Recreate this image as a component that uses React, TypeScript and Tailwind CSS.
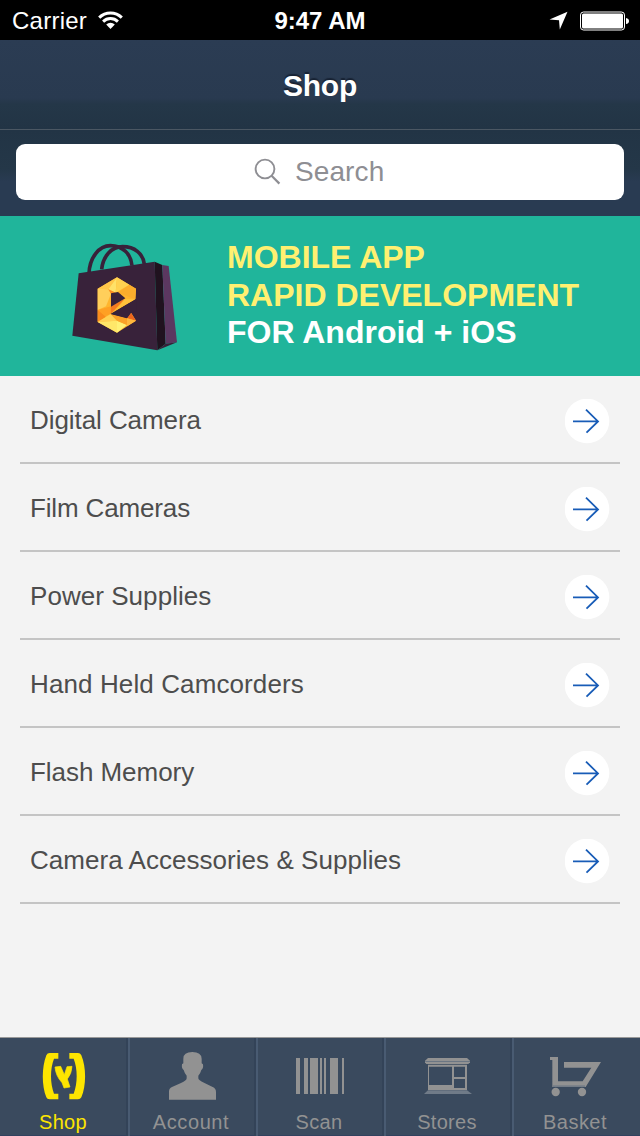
import type { ReactNode } from "react";

const categories = [
  { name: "Digital Camera", spacing: "tracking-[-0.07px]" },
  { name: "Film Cameras", spacing: "tracking-[-0.15px]" },
  { name: "Power Supplies", spacing: "tracking-[0.05px]" },
  { name: "Hand Held Camcorders", spacing: "tracking-[0.11px]" },
  { name: "Flash Memory", spacing: "tracking-[-0.05px]" },
  { name: "Camera Accessories & Supplies", spacing: "tracking-[0.04px]" },
];

function StatusBar() {
  return (
    <div className="flex h-10 items-center bg-black text-white">
      <div className="flex w-[240px] items-center gap-[11px] pl-3">
        <span className="w-[75px] pt-[2px] text-[24px] leading-[40px] tracking-[0.25px] whitespace-nowrap">Carrier</span>
        <svg className="h-[18px] w-[25px]" viewBox="0 0 25 18" fill="none" stroke="white">
          <path d="M1.2 6.6a16 16 0 0 1 22.6 0" strokeWidth="3" />
          <path d="M5.1 10.6a10.5 10.5 0 0 1 14.8 0" strokeWidth="2.9" />
          <path d="M12.5 18 8.2 13.6a6.2 6.2 0 0 1 8.6 0z" fill="white" stroke="none" />
        </svg>
      </div>
      <div className="w-[160px] pt-[2px] text-center text-[24px] leading-[40px] font-bold whitespace-nowrap">9:47 AM</div>
      <div className="flex w-[240px] items-center justify-end pr-[11px]">
        <svg className="mr-[11px] h-[20px] w-[19px]" viewBox="0 0 19 20" fill="white">
          <path d="M.5 9.6 18.5 1.8 10.8 19.6 10 10.2z" />
        </svg>
        <svg className="mt-px h-[20px] w-[50px]" viewBox="0 0 50 20">
          <rect x="1.5" y="1" width="44" height="18" rx="3" fill="none" stroke="white" strokeWidth="1" />
          <rect x="3" y="2.5" width="41" height="15" rx="1.5" fill="white" />
          <path d="M47 7q3 .5 3 3t-3 3z" fill="white" />
        </svg>
      </div>
    </div>
  );
}

function Bag() {
  return (
    <svg className="h-[130px] w-[130px]" viewBox="0 0 390 390">
      <g fill="none" stroke="#38223a" strokeWidth="11">
        <path d="M87 132C88 82 118 47 151 47C188 47 213 72 216 107" />
        <path d="M125 118C129 78 155 50 188 50C223 50 249 70 253 103" />
      </g>
      <path d="M56 130 284 95 292 361 37 317z" fill="#38223a" />
      <path d="M284 95 307 105 317 341 292 361z" fill="#20121f" />
      <path d="M307 105 326 108 351 337 317 341z" fill="#5b3760" />
      <path d="M292 361 317 341 351 337z" fill="#382039" />
      <path d="M171 142 228 176 226 208 152 252 201 265 213 248 228 272 171 308 113 276V176z" fill="#ffb52e" />
      <path d="M171 142 113 176 145 178z" fill="#ffc64a" />
      <path d="M171 142 167 188 145 178z" fill="#ffe168" />
      <path d="M171 142 208 164 167 188z" fill="#ffd150" />
      <path d="M208 164 228 176 226 208 174 188z" fill="#fbad2c" />
      <path d="M113 176 145 178 153 191 138 229 113 240z" fill="#ffcf5b" />
      <path d="M145 178 167 188 153 191z" fill="#f88b1f" />
      <path d="M113 240 153 229 152 252 130 262z" fill="#ffa024" />
      <path d="M113 240 138 261 113 276z" fill="#f98b1d" />
      <path d="M153 229 195 206 152 252z" fill="#f47a20" />
      <path d="M195 206 226 208 169 240z" fill="#ffc13b" />
      <path d="M113 276 152 252 171 272z" fill="#ffd155" />
      <path d="M113 276 171 272V308z" fill="#ffe769" />
      <path d="M171 272 201 285 171 308z" fill="#fff176" />
      <path d="M152 252 201 265 201 285 171 272z" fill="#faa227" />
      <path d="M201 265 213 248 228 272z" fill="#ed671d" />
      <path d="M201 265 228 272 201 289z" fill="#ffb83d" />
      <path d="M153 190 174 186 196 205 153 230z" fill="#38223a" />
      <path d="M152 252 230 206V244L213 248 201 265z" fill="#38223a" />
    </svg>
  );
}

function Tab({ label, active = false, edges, spacing = "", children }: { label: string; active?: boolean; edges: string; spacing?: string; children: ReactNode }) {
  return (
    <div className={`flex w-32 flex-col items-center ${edges} ${active ? "text-[#fde500]" : "text-[#929292]"}`}>
      <svg className="h-[70px] w-32 shrink-0" viewBox="0 24 384 210" fill="currentColor">
        {children}
      </svg>
      <span className={`pr-[2px] text-[20px] leading-[29px] whitespace-nowrap ${spacing}`}>{label}</span>
    </div>
  );
}

const innerEdges = "shadow-[inset_2px_0_#495b72,inset_-2px_0_#334358,inset_0_-1px_#31415e]";

export default function App() {
  return (
    <div className="flex h-[1136px] w-[640px] flex-col overflow-hidden bg-[#f3f3f3] font-['Liberation_Sans',Arial,sans-serif]">
      <StatusBar />
      <header className="flex h-[90px] items-center justify-center border-b border-[#4b5763] bg-[linear-gradient(#2b3c53_0%,#293a50_65%,#243748_72%,#223445_100%)] pt-[2px] text-[30px] font-bold tracking-[-0.2px] text-white [text-shadow:0_-2px_1px_#182334]">
        Shop
      </header>
      <div className="h-[86px] bg-[linear-gradient(#223445_0%,#243748_45%,#293b52_60%,#293b52_100%)] px-4 pt-[14px]">
        <div className="flex h-14 items-center rounded-[9px] bg-white pl-[238px] text-[#8e8e93]">
          <svg className="-mt-px h-[27px] w-[27px]" viewBox="0 0 27 27" fill="none" stroke="currentColor" strokeWidth="1.9">
            <circle cx="11" cy="11" r="9.4" />
            <path d="m17.6 17.8 7.8 7.8" strokeWidth="2.2" />
          </svg>
          <span className="ml-[14px] text-[28px] tracking-[0.1px]">Search</span>
        </div>
      </div>
      <section className="flex h-40 bg-[#20b59b] pt-[14px] pl-[60px]">
        <Bag />
        <div className="pt-[8px] pl-[37px] text-[32px] leading-[38px] font-bold whitespace-nowrap text-[#fff071]">
          <div>MOBILE APP</div>
          <div>RAPID DEVELOPMENT</div>
          <div className="-mt-px text-white">FOR Android + iOS</div>
        </div>
      </section>
      <main className="flex-1 px-5">
        {categories.map((item) => (
          <div key={item.name} className="flex h-[88px] items-center justify-between border-b-2 border-[#c4c4c4] pr-[10px] pl-[10px]">
            <span className={`pt-[2px] text-[26px] whitespace-nowrap text-[#4d4d4d] ${item.spacing}`}>{item.name}</span>
            <svg className="mt-[4px] h-[45px] w-[45px]" viewBox="0 0 45 45">
              <circle cx="22" cy="22" r="22.3" fill="white" />
              <path d="M8 22.4h25M21 10.6 33 22.4 21.5 33.6" fill="none" stroke="#185cb7" strokeWidth="1.8" />
            </svg>
          </div>
        ))}
      </main>
      <nav className="flex h-[99px] border-t border-[#999999] bg-[#3a4a5e]">
        <Tab label="Shop" active edges="shadow-[inset_-2px_0_#334358,inset_0_-1px_#31415e]" spacing="tracking-[0.3px]">
          <path d="M175 69V86H162C150 117 150 159 162 191H175V208H149Q141 208 139 202C125 168 125 111 139 76Q142 69 149 69zM208 69H234Q241 69 244 76C259 111 259 168 244 202Q241 208 234 208H208V191H221C233 159 233 117 221 86H208z" />
          <path d="M165 111 182 109 193 134 201 110 216 109Q215 132 202 147L210 171 192 174 186 158Q167 138 165 111z" stroke="currentColor" strokeWidth="2" />
        </Tab>
        <Tab label="Account" edges={innerEdges} spacing="tracking-[0.6px]">
          <path d="M123 209V184Q123 175 132 171L159 159Q176 152 176 145V137Q170 131 167 120Q160 116 162 103L166 100V86Q166 66 193 66T221 86V100L225 103Q227 116 220 120Q217 131 211 137V145Q211 151 228 158L254 171Q264 175 264 186V209z" />
        </Tab>
        <Tab label="Scan" edges={innerEdges} spacing="tracking-[0.3px]">
          <path d="M120 84h12v108h-12zM144 84h12v108h-12zM162 84h24v108h-24zM192 84h6v108h-6zM204 84h6v108h-6zM222 84h24v108h-24zM258 84h6v108h-6z" />
        </Tab>
        <Tab label="Stores" edges={innerEdges} spacing="tracking-[0.3px]">
          <path d="M132 84H249L258 92V97L253 102H127L123 97V92z" />
          <path d="M124 93H258V96H124z" fill="#6b7683" />
          <path fillRule="evenodd" d="M132 104H249V180H132zM135 110V165H204V110zM210 110V141H243V110zM210 147V174H243V147z" />
          <path d="M132 181H249L264 192H120z" fill="#707b88" />
        </Tab>
        <Tab label="Basket" edges="shadow-[inset_2px_0_#495b72,inset_0_-1px_#31415e]" spacing="tracking-[0.45px]">
          <g transform="translate(-6 0)">
            <path d="M120 81H144V154H218L244 113H162V96H273L227 171H127V90H120z" />
            <path d="M129 166H225V171H129z" fill="#737c87" />
            <circle cx="137" cy="186" r="12.5" />
            <circle cx="216" cy="186" r="12.5" />
          </g>
        </Tab>
      </nav>
    </div>
  );
}
